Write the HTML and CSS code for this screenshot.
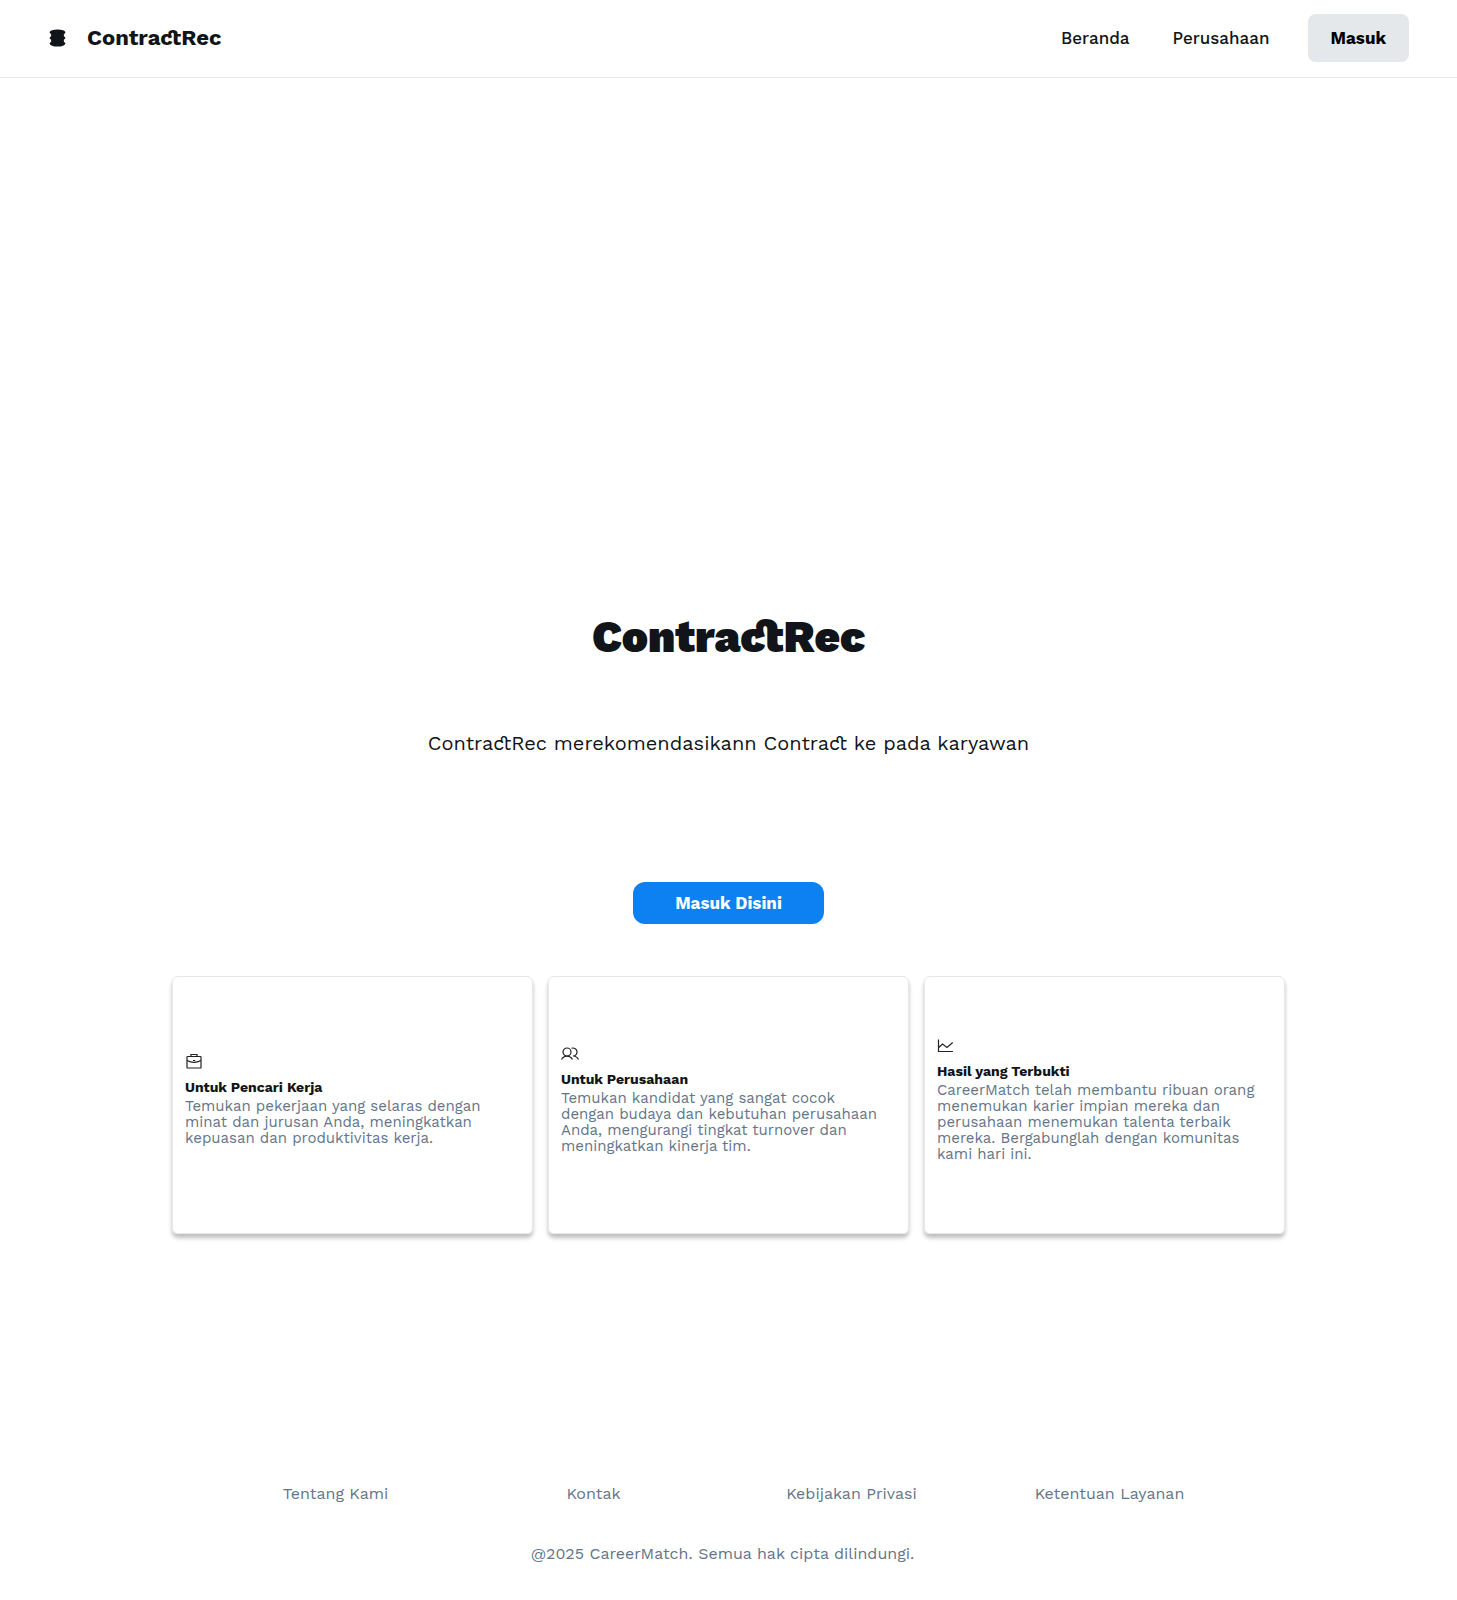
FILE: index.html
```html
<!DOCTYPE html>
<html lang="id">
<head>
<meta charset="utf-8">
<meta name="viewport" content="width=device-width, initial-scale=1">
<title>ContractRec</title>
<link rel="stylesheet" href="styles.css">
</head>
<body>
<header class="site-header">
  <a class="brand" href="#">
    <svg class="brand-icon" viewBox="0 0 17 17" aria-hidden="true">
      <ellipse cx="8.500" cy="3.200" rx="7.500" ry="2.700"/>
      <ellipse cx="8.500" cy="8.500" rx="7.500" ry="2.700"/>
      <ellipse cx="8.500" cy="13.800" rx="7.500" ry="2.700"/>
      <rect x="2.500" y="3" width="12" height="11"/>
    </svg>
    <span class="brand-name">ContractRec</span>
  </a>
  <nav class="site-nav">
    <a class="nav-link" href="#">Beranda</a>
    <a class="nav-link" href="#">Perusahaan</a>
    <button class="login-button" type="button">Masuk</button>
  </nav>
</header>
<main class="page">
  <section class="hero">
    <h1 class="hero-title">ContractRec</h1>
    <p class="hero-text">ContractRec merekomendasikann Contract ke pada karyawan</p>
    <button class="hero-button" type="button">Masuk Disini</button>
  </section>
  <section class="cards">
    <article class="card">
      <svg class="card-icon" viewBox="0 0 18 18" aria-hidden="true">
        <rect x="2" y="4.500" width="14" height="11.500" rx=".6"/>
        <path d="M6 4.500V2.500h6v2M2 8.500c4.500 2.400 9.500 2.400 14 0M8 8.500h2.200"/>
      </svg>
      <h2 class="card-title">Untuk Pencari Kerja</h2>
      <p class="card-text">Temukan pekerjaan yang selaras dengan minat dan jurusan Anda, meningkatkan kepuasan dan produktivitas kerja.</p>
    </article>
    <article class="card">
      <svg class="card-icon" viewBox="0 0 18 18" aria-hidden="true">
        <circle cx="6" cy="8" r="4"/>
        <path d="M.5 15.500c2.500-4.600 8.500-4.600 11 0M10.500 4.300a4 4 0 1 1 1.500 7.700c2.400 0 4.300 1.300 5.500 3.500"/>
      </svg>
      <h2 class="card-title">Untuk Perusahaan</h2>
      <p class="card-text">Temukan kandidat yang sangat cocok dengan budaya dan kebutuhan perusahaan Anda, mengurangi tingkat turnover dan meningkatkan kinerja tim.</p>
    </article>
    <article class="card">
      <svg class="card-icon" viewBox="0 0 18 18" aria-hidden="true">
        <path d="M1.500 3.500v12h14.500M1.500 11.700l4-3.700 4.500 3.500 5.700-5"/>
      </svg>
      <h2 class="card-title">Hasil yang Terbukti</h2>
      <p class="card-text">CareerMatch telah membantu ribuan orang menemukan karier impian mereka dan perusahaan menemukan talenta terbaik mereka. Bergabunglah dengan komunitas kami hari ini.</p>
    </article>
  </section>
</main>
<footer class="site-footer">
  <nav class="footer-links">
    <a class="footer-link" href="#">Tentang Kami</a>
    <a class="footer-link" href="#">Kontak</a>
    <a class="footer-link" href="#">Kebijakan Privasi</a>
    <a class="footer-link" href="#">Ketentuan Layanan</a>
  </nav>
  <p class="copyright">@2025 CareerMatch. Semua hak cipta dilindungi.</p>
</footer>
</body>
</html>
```
FILE: styles.css
```css
* {
  box-sizing: border-box;
}

body {
  margin: 0;
  background: #fff;
  color: #111418;
  font-family: "Work Sans", Inter, sans-serif;
  font-size: 16px;
  font-variant-ligatures: common-ligatures discretionary-ligatures;
}

h1, h2, p {
  margin: 0;
}

a {
  color: inherit;
  text-decoration: none;
}

button {
  border: 0;
  font-family: inherit;
  font-size: 17px;
  font-weight: 700;
  cursor: pointer;
}

.site-header {
  display: flex;
  align-items: center;
  justify-content: space-between;
  padding: 14px 48px 15px;
  border-bottom: 1px solid #e5e8eb;
}

.brand {
  display: flex;
  align-items: center;
  gap: 20px;
}

.brand-icon {
  width: 19px;
  height: 18px;
  fill: #111418;
}

.brand-name {
  font-size: 22px;
  font-weight: 700;
  line-height: 28px;
}

.site-nav {
  display: flex;
  align-items: center;
  gap: 43px;
}

.nav-link {
  font-size: 17px;
  font-weight: 500;
}

.login-button {
  height: 48px;
  margin-left: -5px;
  padding: 0 23px;
  border-radius: 8px;
  background: #e4e8eb;
  color: #000;
}

.page {
  padding: 529px 24px 0;
}

.hero {
  display: flex;
  flex-direction: column;
  align-items: center;
  text-align: center;
}

.hero-title {
  font-size: 44px;
  font-weight: 900;
  line-height: 60px;
}

.hero-text {
  margin-top: 62px;
  font-size: 20px;
  line-height: 28px;
}

.hero-button {
  height: 42px;
  margin-top: 125px;
  padding: 0 42px;
  border-radius: 12px;
  background: #0d80f2;
  color: #fff;
}

.cards {
  display: grid;
  grid-template-columns: repeat(3, 1fr);
  gap: 15px;
  max-width: 1113px;
  margin: 52px auto 0;
}

.card {
  display: flex;
  flex-direction: column;
  justify-content: center;
  min-height: 258px;
  padding: 0 20px 12px 12px;
  border: 1px solid #e5e8eb;
  border-radius: 6px;
  box-shadow: 0 4px 4px rgba(0, 0, 0, 0.25);
}

.card-icon {
  width: 18px;
  height: 18px;
  fill: none;
  stroke: #222;
  stroke-width: 1.200;
}

.card-title {
  margin-top: 8px;
  margin-bottom: 2px;
  font-size: 14px;
  font-weight: 700;
  line-height: 18px;
}

.card-text {
  color: #637588;
  font-size: 15px;
  line-height: 16px;
}

.site-footer {
  padding: 248px 12px 36px 0;
  color: #637588;
  line-height: 24px;
  text-align: center;
}

.footer-links {
  display: grid;
  grid-template-columns: repeat(4, 1fr);
  max-width: 1032px;
  margin: 0 auto;
}

.copyright {
  margin-top: 36px;
}
```
